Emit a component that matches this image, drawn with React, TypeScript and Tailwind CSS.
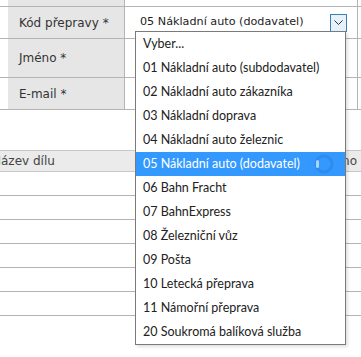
import React from 'react';

const options = [
  'Vyber...',
  '01 Nákladní auto (subdodavatel)',
  '02 Nákladní auto zákazníka',
  '03 Nákladní doprava',
  '04 Nákladní auto železnic',
  '05 Nákladní auto (dodavatel)',
  '06 Bahn Fracht',
  '07 BahnExpress',
  '08 Železniční vůz',
  '09 Pošta',
  '10 Letecká přeprava',
  '11 Námořní přeprava',
  '20 Soukromá balíková služba',
];

function FormRow({ label, h, children }: { label?: string; h: string; children?: React.ReactNode }) {
  return (
    <div className={`flex border-b border-[#b4b4b4] ${h}`}>
      <div className="w-[8px]" />
      <div className="w-[117px] bg-[#e6e6e6] border-r border-[#b4b4b4] flex items-center pl-[11px] text-[#333]">
        {label}
      </div>
      <div className="flex-1 flex items-center">{children}</div>
      <div className="w-[4px] border-l border-[#b4b4b4]" />
    </div>
  );
}

export default function App() {
  return (
    <div
      className="relative w-[361px] h-[357px] overflow-hidden bg-white text-[12px]"
      style={{ fontFamily: '"DejaVu Sans", Verdana, sans-serif' }}
    >
      {/* top form */}
      <FormRow h="h-[7px]" />
      <FormRow label="Kód přepravy *" h="h-[32px]">
        <div className="flex-1 flex items-center justify-between pl-[15px] pr-[10px] text-[#222] text-[11.2px]">
          <span>05 Nákladní auto (dodavatel)</span>
          <span className="w-[17px] h-[18px] border border-[#3c7fb1] bg-[#e5f1fb] flex items-center justify-center">
            <svg width="9" height="6" viewBox="0 0 9 6">
              <path d="M0.5 0.5 L4.5 4.5 L8.5 0.5" fill="none" stroke="#333" strokeWidth="1" />
            </svg>
          </span>
        </div>
      </FormRow>
      <FormRow label="Jméno *" h="h-[39px]" />
      <FormRow label="E-mail *" h="h-[32px]" />

      {/* parts table */}
      <div className="mt-[40px]">
        <div className="h-[22px] bg-[#ebebeb] border-y border-[#c8c8c8] flex items-center justify-between text-[#444] overflow-hidden">
          <span className="-ml-[8px]">Název dílu</span>
          <span className="pr-[4px]">Jméno</span>
        </div>
        {[0, 1, 2, 3, 4, 5].map((i) => (
          <div key={i} className="h-[24px] border-b border-[#b4b4b4]" />
        ))}
      </div>

      {/* open dropdown */}
      <div
        className="absolute left-[135px] top-[31px] w-[211px] bg-white border border-[#7a7a7a] shadow-[2px_2px_3px_rgba(0,0,0,0.12)]"
        style={{ fontFamily: 'Lato, "Noto Sans", sans-serif' }}
      >
        {options.map((o, i) => (
          <div
            key={o}
            className={`h-[24px] flex items-center pl-[7px] text-[12.5px] ${
              i === 5 ? 'bg-[#3399ff] text-white relative' : 'text-[#222]'
            }`}
          >
            {o}
            {i === 5 && (
              <svg className="absolute left-[177px] top-[1px]" width="22" height="22" viewBox="0 0 22 22">
                <circle cx="11" cy="11" r="8" fill="none" stroke="#2f8cec" strokeWidth="3" />
                <rect x="3" y="7" width="3" height="8" rx="1.5" fill="#a9d4ff" />
              </svg>
            )}
          </div>
        ))}
      </div>
    </div>
  );
}
